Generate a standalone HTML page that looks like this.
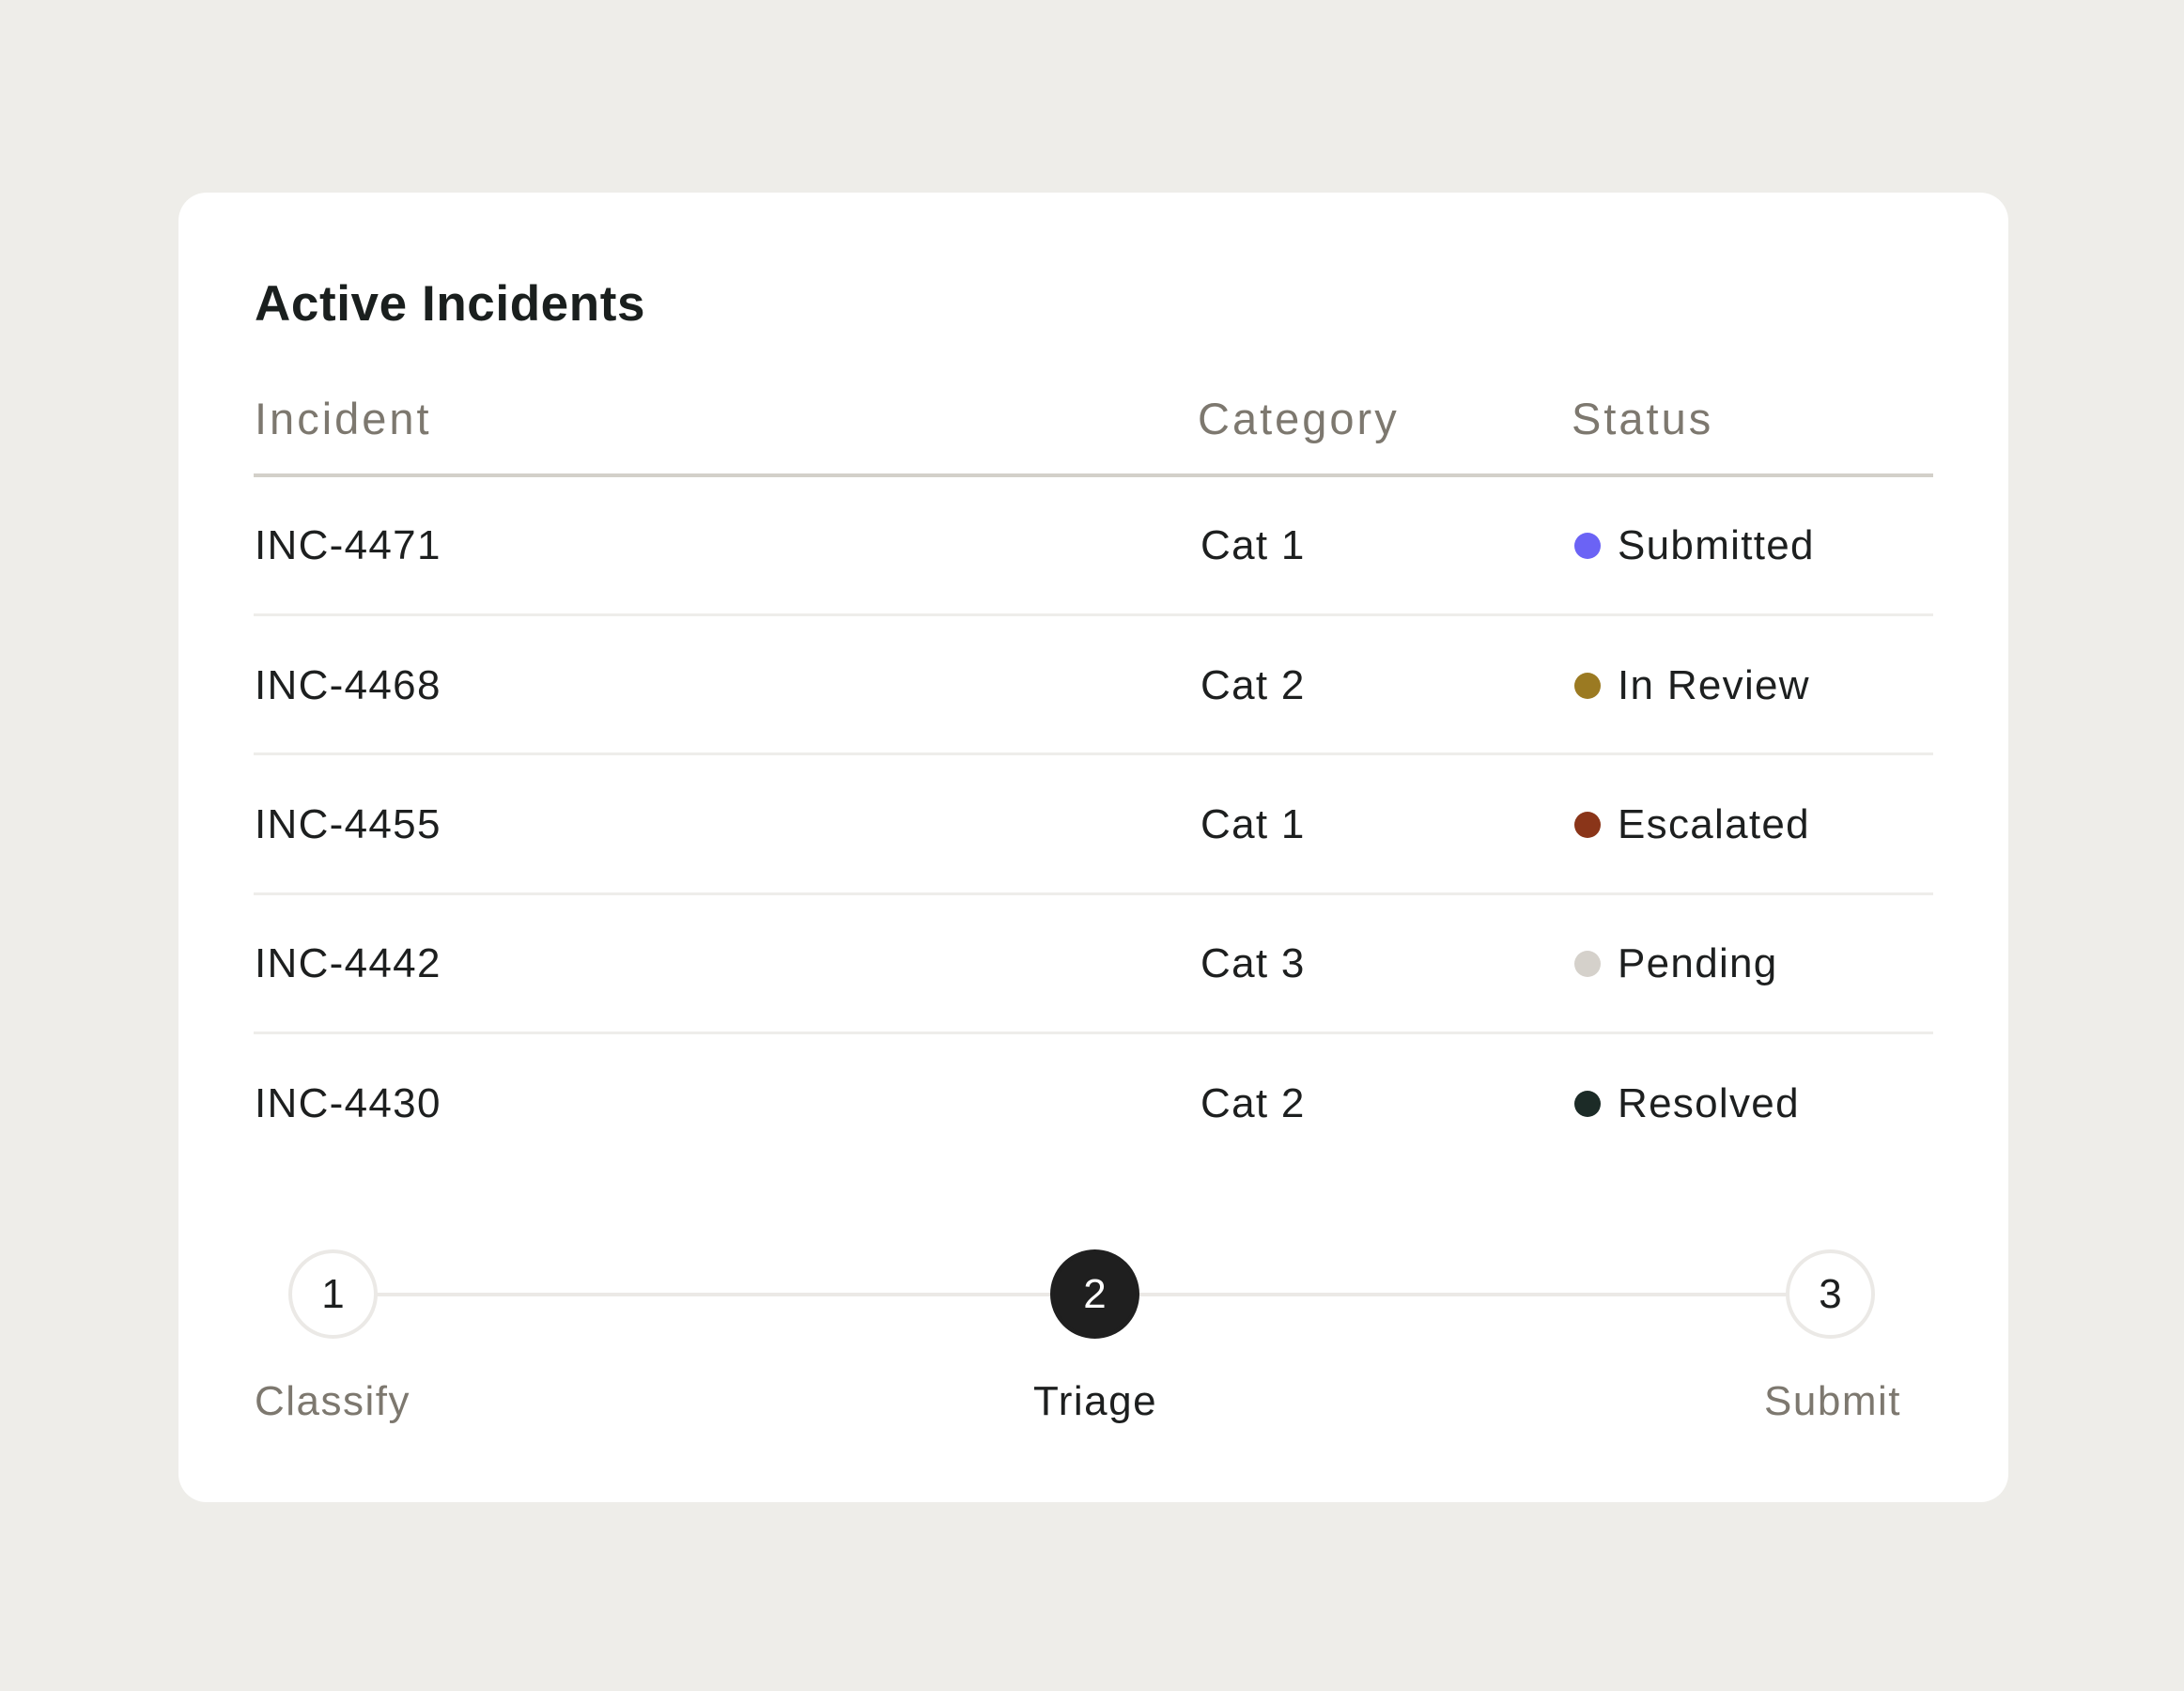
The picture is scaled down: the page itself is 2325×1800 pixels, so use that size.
<!DOCTYPE html>
<html><head><meta charset="utf-8"><style>
*{margin:0;padding:0;box-sizing:border-box}
body{width:2325px;height:1800px;background:#eeede9;font-family:"Liberation Sans",sans-serif;position:relative;overflow:hidden}
.card{position:absolute;left:190px;top:205px;width:1948px;height:1394px;background:#fff;border-radius:30px}
.t{position:absolute;white-space:nowrap;line-height:1}
.title{left:271px;top:297px;font-size:53px;font-weight:bold;color:#1a1f1e;letter-spacing:0.6px}
.h{top:422px;font-size:47px;color:#7d786f;letter-spacing:3px}
.hl{position:absolute;left:270px;width:1788px;top:504px;height:4px;background:#d3d0c9}
.dv{position:absolute;left:270px;width:1788px;height:3px;background:#eeedea}
.r{font-size:44px;color:#1d1f1f;letter-spacing:1.3px}
.dot{position:absolute;width:28px;height:28px;border-radius:50%;left:1676px}
.line{position:absolute;left:354px;width:1595px;top:1376px;height:4px;background:#ebe9e6}
.c{position:absolute;width:95px;height:95px;border-radius:50%;top:1330px;border:4px solid #ebe9e6;background:#fff;font-size:44px;color:#1d1f1f;display:flex;align-items:center;justify-content:center}
.lab{top:1470px;font-size:44px;color:#7d786f;letter-spacing:1.5px}
</style></head><body>
<div class="card"></div>
<div class="t title">Active Incidents</div>
<div class="t h" style="left:271px">Incident</div>
<div class="t h" style="left:1275px">Category</div>
<div class="t h" style="left:1673px">Status</div>
<div class="hl"></div>
<div class="dv" style="top:653px"></div>
<div class="dv" style="top:801px"></div>
<div class="dv" style="top:950px"></div>
<div class="dv" style="top:1098px"></div>

<div class="t r" style="left:271px;top:559px">INC-4471</div>
<div class="t r" style="left:1278px;top:559px">Cat 1</div>
<div class="dot" style="top:567px;background:#6b63f5"></div>
<div class="t r" style="left:1722px;top:559px">Submitted</div>

<div class="t r" style="left:271px;top:708px">INC-4468</div>
<div class="t r" style="left:1278px;top:708px">Cat 2</div>
<div class="dot" style="top:716px;background:#9b7a22"></div>
<div class="t r" style="left:1722px;top:708px">In Review</div>

<div class="t r" style="left:271px;top:856px">INC-4455</div>
<div class="t r" style="left:1278px;top:856px">Cat 1</div>
<div class="dot" style="top:864px;background:#8a3519"></div>
<div class="t r" style="left:1722px;top:856px">Escalated</div>

<div class="t r" style="left:271px;top:1004px">INC-4442</div>
<div class="t r" style="left:1278px;top:1004px">Cat 3</div>
<div class="dot" style="top:1012px;background:#d5d1cb"></div>
<div class="t r" style="left:1722px;top:1004px">Pending</div>

<div class="t r" style="left:271px;top:1153px">INC-4430</div>
<div class="t r" style="left:1278px;top:1153px">Cat 2</div>
<div class="dot" style="top:1161px;background:#1c2b27"></div>
<div class="t r" style="left:1722px;top:1153px">Resolved</div>

<div class="line"></div>
<div class="c" style="left:307px">1</div>
<div class="c" style="left:1118px;background:#1f1f1f;border-color:#1f1f1f;color:#fff">2</div>
<div class="c" style="left:1901px">3</div>
<div class="t lab" style="left:271px">Classify</div>
<div class="t lab" style="left:1166px;transform:translateX(-50%);color:#1d1f1f">Triage</div>
<div class="t lab" style="right:301px">Submit</div>
</body></html>
